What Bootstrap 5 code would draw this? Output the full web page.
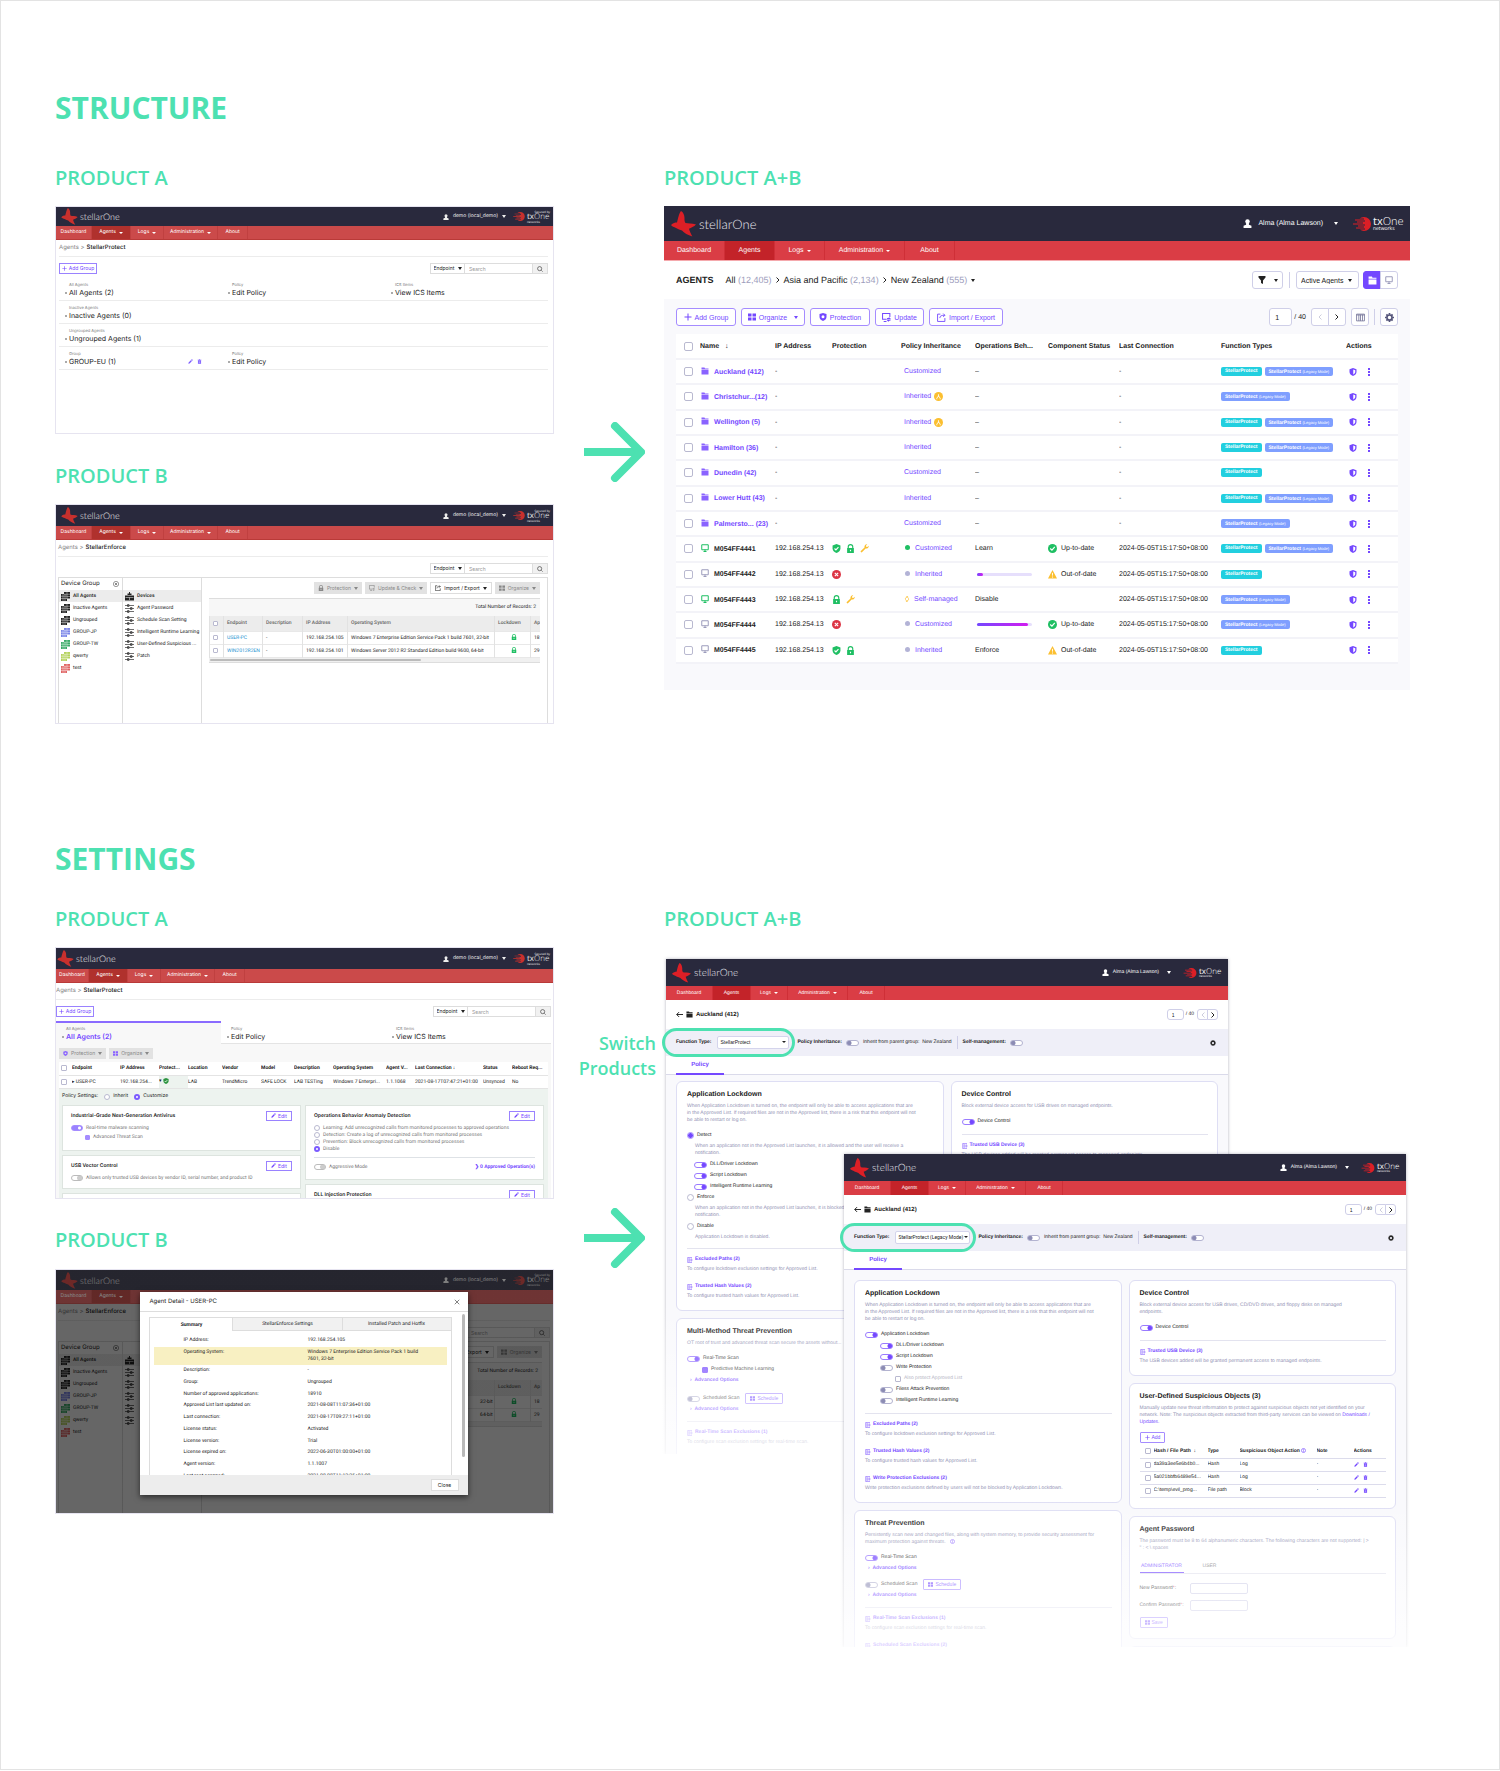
<!DOCTYPE html>
<html lang="en">
<head>
<meta charset="utf-8">
<meta name="viewport" content="width=device-width, initial-scale=1">
<title>Structure and Settings</title>
<link href="https://cdn.jsdelivr.net/npm/bootstrap@5.3.0/dist/css/bootstrap.min.css" rel="stylesheet">
<style>
:root{--mint:#4de1b1;--vio:#7448ff;--navy:#29293d;--mut:#9292b4}
body{background:#fff;color:#222}
.sheet{border:1px solid #e3e3e3;padding:87px 89px 122px 54px;font-family:"Open Sans","Noto Sans",sans-serif}
.sheet h1,.sheet h2,.switch-note{color:var(--mint);margin:0}
.sheet h1{font-size:30px;line-height:40px;font-weight:700}
.sheet h2{font-size:20px;line-height:28px;font-weight:600;margin-bottom:14px}
.board{display:grid;grid-template-columns:minmax(0,499fr) 110px minmax(0,746fr)}
.b1{margin-top:36px}.b2{margin-top:26px}
.second{margin-top:115px}
.mid{padding:0 8px 0 30px}
.mid svg{display:block;width:61px;height:60px}
.b1 .mid svg{margin-top:258px}
.b2 .mid svg{margin-top:127px}
.switch-note{font-size:18px;line-height:25px;font-weight:600;text-align:right;margin-top:126px;margin-left:-30px}
.scr{overflow:hidden;position:relative;line-height:1;background:#fff;margin:0;text-rendering:geometricPrecision}
.scr h3,.scr p{margin:0}
.scr a{text-decoration:none;color:var(--vio)}
.scr button,.scr select,.scr input{font:inherit;line-height:1;margin:0;padding:0;border-radius:0;color:inherit;background:none;border:0}
.scr button{display:inline-flex;align-items:center;justify-content:center;white-space:nowrap}
.scr label{display:inline-flex;align-items:center}
.scr table{table-layout:fixed;width:100%;border-collapse:collapse}
.scr td,.scr th{overflow:hidden;white-space:nowrap;padding:0}
.ic{flex:none;display:inline-block;vertical-align:middle;fill:currentColor}
.s5{width:5px;height:5px}.s6{width:6px;height:6px}.s7{width:7px;height:7px}.s8{width:8px;height:8px}.s9{width:9px;height:9px}.s10{width:10px;height:10px}
.car{flex:none;display:inline-block;border:2px solid transparent;border-top:3px solid currentColor;border-bottom:0;vertical-align:middle}
.chev{width:4px;height:6px;flex:none;fill:none;stroke:currentColor;stroke-width:1}
.scr input[type=checkbox],.scr input[type=radio]{appearance:none;flex:none;border:1px solid #b9b9d0;border-radius:1px;background:#fff;display:block}
.scr input[type=radio]{border-radius:50%}
/* legacy console */
.old{border:1px solid #e6e4f0;font-family:Inter,"Noto Sans",sans-serif;font-size:5px}
.o-top{height:19px;background:var(--navy);color:#eee;display:flex;align-items:center;overflow:hidden}
.o-top .bird{width:17px;height:17px;margin:0 2px 0 5px}
.o-top .word{font:300 9px Lato,"Open Sans";flex:1}
.o-top .who{gap:4px;margin-right:7px}
.bird,.disc{flex:none;fill:#c8302d}
.o-top .disc{width:12px;height:9px;margin-right:2px}
.o-top .brand{font:8px/8px "Open Sans";width:26px}
.o-top .brand small{display:block;font-size:3px;line-height:2px;text-align:right;padding-right:3px}
.o-top .brand small+b+i+small{text-align:left}
.brand b{font-weight:500}.brand i{font-style:normal;font-weight:300}
.o-nav{height:14px;background:#cb4a4a;color:#fff;display:flex;border-bottom:1px solid #b93a38}
.o-nav a{color:#fff!important;display:flex;align-items:center;justify-content:center;gap:3px;border-right:1px solid #c04040}
.o-nav .car,.m-nav .car{border-width:2px 2px 0}
.o-nav a:nth-child(1){width:36px}.o-nav a:nth-child(2){width:39px}.o-nav a:nth-child(3){width:33px}.o-nav a:nth-child(4){width:54px}.o-nav a:nth-child(5){width:30px}
.o-nav .on{background:#b0312d}
.o-body{padding:0 5px 0 3px}
.crumb{height:17px;border-bottom:1px solid #ececec;font-size:6px;color:#888;display:flex;align-items:center;gap:2px}
.crumb b{font-weight:500;color:#222}
.bar1{display:flex;justify-content:space-between;margin-top:6px;height:11px}
.scr .add{border:1px solid #9a82ff;color:var(--vio);width:38px;gap:2px}
.find{display:flex;border:1px solid #ddd;height:11px}
.find label{width:34px;justify-content:center;gap:2px;border-right:1px solid #ddd}
.scr .find select{appearance:none;width:22px}
.scr .find input{width:67px;padding-left:4px}
.scr input::placeholder{color:#999;opacity:1}
.scr .find button{width:15px;background:#f1f1f1;border-left:1px solid #ddd}
.grp{border-bottom:1px solid #ececec;height:23px;padding-top:4px}
.grp small,.tabs3 small{display:block;font:4px/5px Inter;color:#777;padding-left:10px}
.grp div div,.tabs3 .big{font-size:7px;line-height:9px;display:flex;align-items:center;margin-top:1px}
.grp div div::before,.tabs3 .big::before{content:"";width:4px;height:2px;margin-left:6px;border-left:2px solid #aaa}
.act{margin-left:auto;margin-right:20px;color:#7b5bff;display:flex;gap:4px}
.setC .o-body,.setB .o-body{padding-left:2px}
.dg{display:flex;border:1px solid #ddd;border-bottom:0;margin-top:3px;height:150px}
.dg ul{list-style:none;margin:0;padding:0;border-right:1px solid #ddd;flex:none;overflow:hidden}
.dg ul:nth-child(1){width:64px}.dg ul:nth-child(2){width:79px}
.dg li{height:12px;display:flex;align-items:center;gap:3px;padding-left:2px;white-space:nowrap;font-family:Roboto,sans-serif}
.dg ul:first-child li:first-child,.dg ul:nth-child(2) li:first-child{height:12px}
.dg .hl{background:#ececec;font-weight:500}
.dg ul:first-child li:first-child{font-family:Inter;font-size:6px;justify-content:space-between;padding-right:3px}
.dgm{flex:1;min-width:0;padding:4px 7px 0 7px}
.btns{display:flex;justify-content:flex-end;gap:3px;height:12px}
.btns button,.obt{background:#e2e2e2!important;color:#888!important;padding:0 4px!important;gap:3px}
.scr .btns .w{background:#fff!important;border:1px solid #ddd;color:#222!important}
.rec{background:#f7f7f7;border-top:1px solid #ddd;height:18px;margin-top:4px;text-align:right;padding:6px 4px 0 0;font-family:Roboto,sans-serif}
.t-old{font:5px Roboto,sans-serif}
.t-old tr{height:13px;border-bottom:1px solid #e8e8e8}
.t-old thead tr{background:#ececec;height:15px}
.t-old td,.t-old th{border-left:1px solid #e2e2e2;padding-left:3px!important}
.scr .t-old input{width:5px;height:5px}
.t-old th{font-weight:500;color:#666}
.t-old th:nth-child(1){width:14px}.t-old th:nth-child(2){width:39px}.t-old th:nth-child(3){width:40px}.t-old th:nth-child(4){width:45px}.t-old th:nth-child(5){width:147px}.t-old th:nth-child(6){width:36px}
.scr .t-old a{color:#1a8fd0}
.sbar{height:5px;background:#f0f0f0;border-bottom:1px solid #ddd;padding:1px}
.sbar::before{content:"";display:block;width:64%;height:2px;border-radius:1px;background:#bbb}
/* legacy settings */
.setA .o-top .bird{margin-left:1px}
.setA .o-nav a:first-child{width:33px}
.setA .o-body{padding:0 2px 0 0}
.tabs3{height:23px;margin-top:4px;background:#fff}
.tabs3>div{border-bottom:1px solid #e4e4e4;padding-top:5px;height:23px}
.tabs3>.on{border-top:2px solid #8a6bff;background:#f8f8f8;border-bottom:0;padding-top:3px}
.tabs3 .on .big{color:var(--vio);font-weight:600}
.gray{background:#f8f8f8;padding:4px 3px 0;margin-right:0}
.t-set{font:5px Roboto,sans-serif;margin-top:3px}
.t-set th{font-weight:700}
.t-set tr{height:13px;background:#fff;border-bottom:1px solid #e4e4e4}
.scr .t-set input{width:6px;height:6px;margin-left:2px}
.t-set th:nth-child(1){width:13px}.t-set th:nth-child(2){width:48px}.t-set th:nth-child(3){width:39px}.t-set th:nth-child(4){width:29px}.t-set th:nth-child(5){width:34px}.t-set th:nth-child(6){width:39px}.t-set th:nth-child(7){width:33px}.t-set th:nth-child(8){width:39px}.t-set th:nth-child(9){width:53px}.t-set th:nth-child(10){width:29px}.t-set th:nth-child(11){width:68px}.t-set th:nth-child(12){width:29px}
.pol{background:#edf3ef;padding:0 4px 0 3px}
.pol .ps{height:16px;display:flex;align-items:center;gap:6px}
.scr .pol input[type=radio]{width:6px;height:6px;margin-right:3px}
.scr .pol input[type=radio]:checked{border:2px solid #7b5bff}
.oc{background:#fff;border:1px solid #dde4df;padding:5px 8px;font:5px/1 Roboto,sans-serif;color:#777;margin-bottom:4px}
.oc h3{font:600 5px/10px Inter;color:#222}
.oc .hd{display:flex;justify-content:space-between;height:10px}
.scr .oc button{border:1px solid #9a82ff;color:var(--vio);width:26px;gap:2px;font:5px Inter}
.scr .oc .r{display:flex;height:7px;white-space:nowrap}
.scr .oc .thr{width:5px;height:5px;margin-right:3px;background:#a58cff;border-color:#a58cff}
.scr .tgl{width:12px!important;height:6px!important;border-radius:3px!important;border:1px solid #bbb!important;background:radial-gradient(circle at 75% 50%,#ccc 2px,#fff 3px)!important;margin-right:3px!important}
.scr .tgl:checked{border-color:#a58cff!important;background:radial-gradient(circle at 75% 50%,#fff 1px,#9a82ff 2px)!important}
/* modal */
.veil{position:absolute;inset:0;background:linear-gradient(rgba(34,34,34,.55) 34px,rgba(0,0,0,.6) 34px)}
.dlg{position:absolute;left:17%;right:calc(17% + 1px);top:22px;height:203px;background:#fff;box-shadow:0 2px 6px rgba(0,0,0,.6);display:flex;flex-direction:column}
.dlg header{height:20px;border-bottom:1px solid #ddd;display:flex;justify-content:space-between;align-items:center;padding:0 8px 0 9px;font-size:6px}
.dlg .mb{flex:1;min-height:0;overflow:hidden;padding:5px 3px 0 9px;display:flex;gap:10px;position:relative}
.dlg .tabbox{flex:1;border:1px solid #ddd;border-bottom:0;height:168px}
.dlg .tb{display:flex;height:13px;background:#f1f1f1;border-bottom:1px solid #ddd}
.dlg .tb a{color:#333;display:flex;align-items:center;justify-content:center;border-left:1px solid #ddd;font:5px Roboto,sans-serif;flex:1}
.dlg .tb a:first-child{background:#fff;width:82px;flex:none;border:0;font-weight:700;margin-bottom:-1px}
.dlg dl{margin:4px 4px 0;display:flex;flex-direction:column;height:147px;font:5px/1 Roboto,sans-serif}
.dlg dl div{flex:1;display:flex;align-items:center;padding-left:29px}
.dlg dl .y{background:#f8f0c2;flex:none;height:18px;line-height:7px}
.dlg dt{width:124px;font-weight:400}.dlg dd{margin:0}
.dlg .y dt{align-self:flex-start;padding-top:2px}
.dlg .thumb{width:3px;height:143px;margin-top:-3px;background:#b9b9b9;border-radius:2px}
.dlg footer{height:20px;background:#ededed;display:flex;justify-content:flex-end;align-items:center;padding-right:9px}
.scr .dlg footer button{width:28px;height:12px;background:#fff;border:1px solid #ddd}
.setB .o-body{padding-right:3px}
/* unified console */
.new{font-family:"Liberation Sans",Arial,sans-serif;background:#f9f9fc;font-size:7px}
.m-top{background:var(--navy);color:#fff;display:flex;align-items:center;height:35px;padding:0 6px 0 7px}
.m-top .bird,.m-top .disc{fill:#dc1f26}
.m-top .bird{width:25px;height:26px;margin-right:3px}
.m-top .word{font:300 13px Lato,"Open Sans";flex:1;color:#e8e8f0}
.m-top .who{gap:6px}.m-top .car{margin:0 15px 0 11px}
.m-top .disc{width:18px;height:14px;margin-right:2px}
.m-top .brand{font:11px/10px "Open Sans";width:31px}
.m-top .brand small{display:block;font-size:5px;line-height:4px}
.m-nav{height:20px;background:#da3d45;border-bottom:1px solid #f5a9ad;display:flex}
.scr .m-nav a{color:#fff;display:flex;align-items:center;justify-content:center;gap:3px;border-right:1px solid #cf2f37}
.m-nav .on{background:#c32329}
.big1 .m-nav a:nth-child(1){width:61px}.big1 .m-nav a:nth-child(2),.big1 .m-nav a:nth-child(3),.big1 .m-nav a:nth-child(5){width:50px}.big1 .m-nav a:nth-child(4){width:80px}
.sub{height:38px;background:#fff;display:flex;align-items:center;padding:0 12px;font-size:9px;gap:4px;white-space:nowrap}
.n{color:#9d9dbc}
.bx{border:1px solid #cfcfe8!important;border-radius:3px!important;background:#fff!important;height:18px}
.scr .pair .bx:first-child{border-radius:3px 0 0 3px!important}
.scr .pair .bx+.bx{margin-left:-1px;border-radius:0 3px 3px 0!important}
.scr .pair .pick{background:#7448ff!important;border-color:#7448ff!important;color:#fff;width:18px}
.bw{width:18px}.b10{width:11px}
.vl{width:1px;height:16px;background:#cfcfe8;margin:0 2px}
.tool{display:flex;gap:5px;padding:9px 12px 8px;align-items:center}
.tool .vl{margin:0}
.scr .pb{border:1px solid #a58cff;border-radius:3px;background:#fff;color:var(--vio);height:18px;gap:3px}
.grid-wrap{padding:0 12px 26px}
.t-main{height:330px;background:#fff}
.t-main tr{border-bottom:2px solid #f3f3f8}
.t-main thead tr{height:25px}
.t-main th{font-weight:700}
.scr .t-main input{width:9px;height:9px;border-radius:2px;margin-left:8px}
.t-main th:nth-child(1){width:24px}.t-main th:nth-child(2){width:75px}.t-main th:nth-child(3){width:57px}.t-main th:nth-child(4){width:69px}.t-main th:nth-child(5){width:74px}.t-main th:nth-child(6){width:73px}.t-main th:nth-child(7){width:71px}.t-main th:nth-child(8){width:102px}.t-main th:nth-child(9){width:125px}
.t-main a{font-weight:700}
.t-main td:nth-child(2) .ic{margin:0 5px 2px 1px}
.t-main td:nth-child(5){color:var(--vio);padding-left:3px}
.t-main td:nth-child(5) .ic{margin-left:1px}
.t-main td:nth-child(4) .ic{margin-right:5px}
.t-main td:nth-child(7) .ic{margin-right:4px}
.t-main td:nth-child(10) .ic{color:var(--vio);margin:0 5px 0 3px}
.dot{display:inline-block;width:5px;height:5px;border-radius:50%;background:#b3b3d6;margin:0 5px 0 1px}
.dot.gok{background:#1fbf63}
.tag1,.tag2{display:inline-block;height:9px;line-height:9px;border-radius:2px;background:#22cfdf;color:#fff;font-size:5px;font-weight:700;padding:0 4px;margin-right:3px;vertical-align:middle}
.tag2{background:#7f9fff}.tag2 span{font-size:4px;font-weight:400}
.pg{height:3px;width:55px;border-radius:2px;background:#e6dffc;margin-left:2px}
.pg div{height:3px;border-radius:2px;background:linear-gradient(90deg,#7448ff,#d21cf0)}
.gr{color:#1fbf63!important}.gy{color:#9d9dbc!important}.rd{color:#dc3545!important}.yl{color:#fbbf30!important}.vi{color:#8a63ff!important}
/* stacked policy windows */
.stack{display:grid}
.win{grid-area:1/1;width:calc(100% - 184px);font-size:5px;box-shadow:0 0 3px rgba(40,40,70,.35);overflow:visible}
.w1{margin:26px 0 0 2px;height:495px}
.w2{margin:221px 4px 0 0;justify-self:end;height:493px;z-index:1}
.win .m-top{height:27px;padding:0 5px 0 6px}
.win .bird{width:19px;height:20px;margin-right:3px}
.win .word{font-size:10px}
.win .who{gap:4px}.win .m-top .car{margin:0 12px 0 8px}
.win .disc{width:14px;height:10px}
.win .brand{font:8px/7px "Open Sans";width:24px}.win .brand small{font-size:3px;line-height:3px}
.win .m-nav{height:14px;border-bottom:0}
.win .m-nav a:nth-child(1){width:47px}.win .m-nav a:nth-child(2){width:38px}.win .m-nav a:nth-child(3),.win .m-nav a:nth-child(5){width:37px}.win .m-nav a:nth-child(4){width:60px}
.ttl{height:29px;background:#fff;display:flex;align-items:center;padding:0 10px;gap:3px;font-size:6px}
.ttl b{flex:1}
.ttl .bx{height:11px;font-size:5px}
.ttl label{font-size:5px;gap:2px}
.fbar{height:27px;background:#efeff8;display:flex;align-items:center;padding:0 12px 0 10px;white-space:nowrap}
.fbar .vl{height:13px;margin:0 5px}
.inh{margin-left:8px}
.fn{position:relative;gap:6px}
.fn::after{content:"";position:absolute;left:-14px;right:-6px;top:-8px;bottom:-8px;border:3px solid var(--mint);border-radius:15px;pointer-events:none}
.scr .fn select{width:72px;height:13px;padding-left:2px;appearance:none;background:#fff;border:1px solid #d4d4ec;border-radius:2px;font-weight:400;font-size:5px}
.w2 .fn select{font-family:Roboto,sans-serif;width:75px}
.fn .car{position:absolute;right:3px;top:5px;border-width:2px 2px 0}
.w2 .fn .car{right:2px}
.ptab{height:19px;background:#fff;border-bottom:1px solid #dadaea;padding-left:10px}
.ptab a{display:block;width:48px;height:19px;line-height:19px;border-bottom:2px solid var(--vio);text-align:center;font-weight:700;font-size:6px}
.cards{display:grid;grid-template-columns:1fr 1fr;gap:7px;padding:6px 10px 0;overflow:hidden;height:379px}
.w2 .cards{padding-top:10px;height:377px}
.pc{background:#fff;border:1px solid #dedef4;border-radius:6px;padding:9px 9px 10px 10px;margin-bottom:7px}
.scr .pc h3{font-size:7px;line-height:8px;font-weight:700;margin-bottom:4px}
.scr .pc p{line-height:7px;color:var(--mut);margin:0 0 6px}
.scr .pc label{display:flex;height:11px;gap:2px}
.pc .sp{margin-top:6px}
.pc .in{padding-left:8px}.pc .i2{margin-left:7px}.pc .i3{margin-left:15px}.pc .i4{margin-left:30px}
.scr .pc input[type=radio]{width:7px;height:7px;margin-right:1px}
.scr .pc input[type=checkbox]{width:6px;height:6px;margin-right:1px}
.scr .pc input[type=radio]:checked{border:1px solid #a58cff;background:radial-gradient(circle,var(--vio) 2px,#fff 3px)}
.win .sw{width:13px!important;height:6px!important;border:1px solid #b3b3d0!important;border-radius:3px!important;background:radial-gradient(circle at 2px 50%,#8c8cb4 2px,#fff 3px)!important}
.scr .fbar .sw{margin:0 4px}
.win .sw:checked{border-color:#9a7bff!important;background:radial-gradient(circle at 9px 50%,var(--vio) 2px,#fff 3px)!important}
.win .ck:checked{background:var(--vio)!important;border-color:var(--vio)!important}
.off{color:#b5b5c4}
.pc hr{margin:7px 0 5px;color:#c8c8e0;opacity:.5}
.pc .lk{display:flex;align-items:center;gap:2px;height:11px;font-weight:700;margin-bottom:1px}
.scr .pc .lk+p{margin-bottom:8px}
.scr .pc p.last{margin-bottom:0!important}
.scr .w1 p.last{margin-bottom:2px!important}
.scr .pc p.z{margin:2px 0}
.scr .sm{border:1px solid #a58cff;border-radius:1px;color:var(--vio);height:11px;gap:2px;padding:0 4px}
.adv{display:block;font-weight:700;line-height:10px;padding-left:3px}
.t-obj{margin-top:2px}
.t-obj tr{height:13px;border-bottom:1px solid #dcdcec}
.t-obj th:nth-child(1){width:14px}.t-obj th:nth-child(2){width:54px}.t-obj th:nth-child(3){width:32px}.t-obj th:nth-child(4){width:77px}.t-obj th:nth-child(5){width:37px}
.scr .pc .t-obj input{margin-left:5px}
.t-obj .ic{color:var(--vio);margin-right:4px}
.adm{display:flex;border-bottom:1px solid #e2e2ee;height:14px;margin-top:8px;margin-bottom:9px}
.scr .adm a{width:44px;text-align:center;line-height:13px;color:#777;margin-right:4px}
.scr .adm .on{color:var(--vio);border-bottom:1px solid var(--vio)}
.scr .pc .pw{margin-bottom:6px}
.pw span:first-child{width:48px}
.scr .pc .pw input{width:58px;height:11px;border:1px solid #cfcfe8;border-radius:2px;background:#fff}
.fade-out{position:absolute;left:-4px;right:-4px;bottom:-4px;height:154px;background:linear-gradient(rgba(255,255,255,0),rgba(255,255,255,.75) 150px,#fff 150px);pointer-events:none}
</style>
</head>
<body>
<svg width="0" height="0" class="position-absolute" aria-hidden="true">
<symbol id="bird" viewBox="0 0 25 26"><path d="M10 0C12 1 13.500 4 13.500 7c-.1 2 .1 4 1 5 2.500.5 6.500 0 10.500 1.600-2 2-5 3.400-7 4.200.5 2.200 2 5.200 3.300 7.700-4.300-1.500-8.300-3.500-10.300-6-2-1-4-1.100-6-2.500-2-1-4-1.500-5-3 2-2 4-2.500 6-2.500C7 8 8 2 10 0Z"/></symbol>
<symbol id="disc" viewBox="0 0 18 14"><path d="M11 0a7 7 0 0 1 0 14c-1.500 0-3-.5-4-1.400h5v-1H3v-1h8v-1H5v-1h7v-1H0v-1h10v-1H4v-1h8v-1H2v-1h9v-1H6.500A7 7 0 0 1 11 0Z"/></symbol>
<symbol id="user" viewBox="0 0 16 16"><circle cx="8" cy="4.500" r="4"/><path d="M5.500 7h5v3l4.500 2v4H1v-4l4.500-2z"/></symbol>
<symbol id="plus" viewBox="0 0 16 16"><path d="M7 1h2v6h6v2H9v6H7V9H1V7h6z"/></symbol>
<symbol id="search" viewBox="0 0 16 16"><path fill="none" stroke="currentColor" stroke-width="1.500" d="M11.500 11.500 15 15M12.500 7a5.500 5.500 0 1 1-11 0 5.500 5.500 0 0 1 11 0z"/></symbol>
<symbol id="pen" viewBox="0 0 16 16"><path d="M1 15l1-4 7-7 3 3-7 7zM10 3l2-2q1-.5 2 .5l.8.8q.7 1 0 1.700l-2 2z"/></symbol>
<symbol id="bin" viewBox="0 0 16 16"><path d="M2 2h4l1-1h2l1 1h4v2H2zM3 5h10v10H3zm3 2v6h1V7zm3 0v6h1V7z" fill-rule="evenodd"/></symbol>
<symbol id="folder" viewBox="0 0 16 16"><path d="M1 1h6l1 2h7v2H1zM1 6h14v9H1z"/></symbol>
<symbol id="mon" viewBox="0 0 16 16"><path fill="none" stroke="currentColor" stroke-width="2" d="M1.500 1.500h13v10h-13zM5 15h6M8 11v4"/></symbol>
<symbol id="shc" viewBox="0 0 16 16"><path d="M8 0l7 2.500V8c0 4-3 6.500-7 8-4-1.500-7-4-7-8V2.500z"/><path fill="none" stroke="#fff" stroke-width="2" d="M4.500 8l2.500 2.500L11.500 5.500"/></symbol>
<symbol id="shh" viewBox="0 0 16 16"><path fill-rule="evenodd" d="M8 0l7 2.500V8c0 4-3 6.500-7 8-4-1.500-7-4-7-8V2.500zM8.500 3v10c2.500-1.500 4-3 4-5V4.300z"/></symbol>
<symbol id="sho" viewBox="0 0 16 16"><path fill-rule="evenodd" d="M8 0l7 2v6c0 4-3 6.500-7 8-4-1.500-7-4-7-8V2zm0 4.500a3 3 0 1 0 0 6 3 3 0 0 0 0-6z"/></symbol>
<symbol id="lock" viewBox="0 0 16 16"><path fill-rule="evenodd" d="M3 7V5a5 5 0 0 1 10 0v2h1v9H2V7zm2 0h6V5a3 3 0 0 0-6 0zm2 3v3h2v-3z"/></symbol>
<symbol id="wr" viewBox="0 0 16 16"><path d="M1 13l7-7c-.5-3 1.500-6 5-5.500L10.500 3l.5 2 2 .5L15.500 3c.5 3.500-2.500 5.500-5.500 5l-7 7q-2 0-2-2z"/></symbol>
<symbol id="xc" viewBox="0 0 16 16"><circle cx="8" cy="8" r="8"/><path stroke="#fff" stroke-width="2" d="M5 5l6 6M11 5l-6 6"/></symbol>
<symbol id="cc" viewBox="0 0 16 16"><circle cx="8" cy="8" r="8"/><path fill="none" stroke="#fff" stroke-width="2" d="M4 8l3 3 5-6"/></symbol>
<symbol id="warn" viewBox="0 0 16 16"><path d="M8 0l8 15H0z"/><path stroke="#fff" stroke-width="1.600" d="M8 5v5M8 11.500v2"/></symbol>
<symbol id="org" viewBox="0 0 16 16"><circle cx="8" cy="8" r="8"/><path fill="none" stroke="#fff" stroke-width="1.500" d="M8 4v4M5 11l3-4 3 4M4 12h2M10 12h2"/></symbol>
<symbol id="self" viewBox="0 0 16 16"><path fill="none" stroke="currentColor" stroke-width="2" d="M4 10V6l5-5M6 2h4v3M12 6v4l-5 5M10 14H6v-3"/></symbol>
<symbol id="dots" viewBox="0 0 16 16"><path d="M6 0h4v4H6zM6 6h4v4H6zM6 12h4v4H6z"/></symbol>
<symbol id="gear" viewBox="0 0 16 16"><circle cx="8" cy="8" r="4.500" fill="none" stroke="currentColor" stroke-width="3"/><path stroke="currentColor" stroke-width="3" d="M8 0v3M8 13v3M0 8h3M13 8h3M2.500 2.500l2 2M11.500 11.500l2 2M13.500 2.500l-2 2M4.500 11.500l-2 2"/></symbol>
<symbol id="fun" viewBox="0 0 16 16"><path d="M1 0h14v3L10 9v7l-4-2V9L1 3z"/></symbol>
<symbol id="cols" viewBox="0 0 16 16"><path fill="none" stroke="currentColor" stroke-width="1.500" d="M1 2h14v12H1zM1 3.500h14M5 3v11M8 3v11M11.500 3v11"/></symbol>
<symbol id="four" viewBox="0 0 16 16"><path d="M0 1h7v6H0zM9 1h7v6H9zM0 9h7v6H0zM9 9h7v6H9z"/></symbol>
<symbol id="upd" viewBox="0 0 16 16"><path fill="none" stroke="currentColor" stroke-width="1.800" d="M8 11H1V1h13v6M3 15h5M9 10h5l-2-2M15 13h-5l2 2"/></symbol>
<symbol id="exp" viewBox="0 0 16 16"><path fill="none" stroke="currentColor" stroke-width="1.600" d="M6 2H1v13h13V9M5 9c0-4 3-5 9-5M11 1l3 3-3 3"/></symbol>
<symbol id="dgi" viewBox="0 0 18 18"><path d="M6 0h12v13H6z"/><path d="M0 4h12v14H0z"/><path stroke="#fff" stroke-width=".8" d="M0 8.500h12M0 13h12M4 4v14M8 4v14M12 0v14M6 4.500h12M12 9h6"/></symbol>
<symbol id="sld" viewBox="0 0 18 18"><path fill="none" stroke="currentColor" stroke-width="1.300" d="M0 3h18M0 9h18M0 15h18M5 1v4h3V1zM11 7v4h3V7zM5 13v4h3v-4z"/></symbol>
<symbol id="dev" viewBox="0 0 18 18"><path d="M0 7h18v10H0zM5 3h8v3H5zM8 0h2v6H8z"/><path stroke="#fff" d="M1 11h16M9 11v5"/></symbol>
<symbol id="doc" viewBox="0 0 16 16"><path fill="none" stroke="currentColor" stroke-width="1.500" d="M12 4V1H2v14h10v-3M4 5h5M4 8h10l-2-2M4 11h5M14 8l-2 2"/></symbol>
<symbol id="inf" viewBox="0 0 16 16"><circle cx="8" cy="8" r="6.500" fill="none" stroke="currentColor" stroke-width="2"/><path d="M7 4h2v2H7zM7 7h2v5H7z"/></symbol>
<symbol id="cx" viewBox="0 0 16 16"><circle cx="8" cy="8" r="7" fill="none" stroke="currentColor" stroke-width="1.200"/><path stroke="currentColor" stroke-width="1.500" d="M5.500 5.500l5 5M10.500 5.500l-5 5"/></symbol>
<symbol id="back" viewBox="0 0 16 16"><path fill="none" stroke="currentColor" stroke-width="2.200" d="M16 8H2M7 2.500L1.500 8 7 13.500"/></symbol>
<symbol id="xr" viewBox="0 0 16 16"><path fill="none" stroke="currentColor" stroke-width="1.500" d="M2 2l12 12M14 2L2 14"/></symbol>
<symbol id="gt" viewBox="0 0 4 6"><path d="M.5.5 3 3 .5 5.500"/></symbol>
<symbol id="lt" viewBox="0 0 4 6"><path d="M3.500.5 1 3l2.500 2.500"/></symbol>
<symbol id="arrow" viewBox="0 0 61 60"><path fill="none" stroke="#4de1b1" stroke-width="8" d="M0 30H56"/><path fill="none" stroke="#4de1b1" stroke-width="8" stroke-linejoin="round" stroke-linecap="round" d="M31 4L57 30 31 56"/></symbol>
</svg>

<main class="sheet">
<section>
<h1>STRUCTURE</h1>
<div class="board b1">
<div>
<h2>PRODUCT A</h2>
<figure class="scr old" style="height:228px">
<div class="o-top"><svg class="bird"><use href="#bird"/></svg><span class="word">stellarOne</span><span class="who d-flex align-items-center"><svg class="ic s6"><use href="#user"/></svg>demo (local_demo)<i class="car"></i></span><svg class="disc"><use href="#disc"/></svg><span class="brand"><small>Secured by</small><b>tx</b><i>One</i><small>networks</small></span></div>
<nav class="o-nav"><a href="#">Dashboard</a><a href="#" class="on">Agents <i class="car"></i></a><a href="#">Logs <i class="car"></i></a><a href="#">Administration <i class="car"></i></a><a href="#">About</a></nav>
<div class="o-body">
<div class="crumb">Agents &gt; <b>StellarProtect</b></div>
<div class="bar1"><button class="add"><svg class="ic s5"><use href="#plus"/></svg>Add Group</button><div class="find"><label><select aria-label="Search field"><option>Endpoint</option></select><i class="car"></i></label><input type="text" placeholder="Search" aria-label="Search"><button aria-label="Search"><svg class="ic s6"><use href="#search"/></svg></button></div></div>
<div class="pt-1">
<div class="row g-0 grp"><div class="col-4"><small>All Agents</small><div>All Agents (2)</div></div><div class="col-4"><small>Policy</small><div>Edit Policy</div></div><div class="col-4"><small>ICS Items</small><div>View ICS Items</div></div></div>
<div class="row g-0 grp"><div class="col-4"><small>Inactive Agents</small><div>Inactive Agents (0)</div></div></div>
<div class="row g-0 grp"><div class="col-4"><small>Ungrouped Agents</small><div>Ungrouped Agents (1)</div></div></div>
<div class="row g-0 grp"><div class="col-4"><small>Group</small><div>GROUP-EU (1)<span class="act"><svg class="ic s5"><use href="#pen"/></svg><svg class="ic s5"><use href="#bin"/></svg></span></div></div><div class="col-4"><small>Policy</small><div>Edit Policy</div></div></div>
</div>
</div>
</figure>
<h2 style="margin-top:28px">PRODUCT B</h2>
<figure class="scr old setC" style="height:220px">
<div class="o-top" style="height:21px"><svg class="bird"><use href="#bird"/></svg><span class="word">stellarOne</span><span class="who d-flex align-items-center"><svg class="ic s6"><use href="#user"/></svg>demo (local_demo)<i class="car"></i></span><svg class="disc"><use href="#disc"/></svg><span class="brand"><small>Secured by</small><b>tx</b><i>One</i><small>networks</small></span></div>
<nav class="o-nav"><a href="#">Dashboard</a><a href="#" class="on">Agents <i class="car"></i></a><a href="#">Logs <i class="car"></i></a><a href="#">Administration <i class="car"></i></a><a href="#">About</a></nav>
<div class="o-body">
<div class="crumb">Agents &gt; <b>StellarEnforce</b></div>
<div class="bar1"><span></span><div class="find"><label><select aria-label="Search field"><option>Endpoint</option></select><i class="car"></i></label><input type="text" placeholder="Search" aria-label="Search"><button aria-label="Search"><svg class="ic s6"><use href="#search"/></svg></button></div></div>
<div class="dg">
<ul><li>Device Group <svg class="ic s6"><use href="#cx"/></svg></li><li class="hl"><svg class="ic s9"><use href="#dgi"/></svg>All Agents</li><li><svg class="ic s9"><use href="#dgi"/></svg>Inactive Agents</li><li><svg class="ic s9"><use href="#dgi"/></svg>Ungrouped</li><li><svg class="ic s9" color="#7b85e8"><use href="#dgi"/></svg>GROUP-JP</li><li><svg class="ic s9" color="#3bab68"><use href="#dgi"/></svg>GROUP-TW</li><li><svg class="ic s9" color="#b4d25c"><use href="#dgi"/></svg>qwerty</li><li><svg class="ic s9" color="#e06464"><use href="#dgi"/></svg>test</li></ul>
<ul><li></li><li class="hl"><svg class="ic s9"><use href="#dev"/></svg>Devices</li><li><svg class="ic s9"><use href="#sld"/></svg>Agent Password</li><li><svg class="ic s9"><use href="#sld"/></svg>Schedule Scan Setting</li><li><svg class="ic s9"><use href="#sld"/></svg>Intelligent Runtime Learning</li><li><svg class="ic s9"><use href="#sld"/></svg>User-Defined Suspicious ...</li><li><svg class="ic s9"><use href="#sld"/></svg>Patch</li></ul>
<div class="dgm">
<div class="btns"><button><svg class="ic s6"><use href="#lock"/></svg>Protection <i class="car"></i></button><button><svg class="ic s6"><use href="#upd"/></svg>Update &amp; Check <i class="car"></i></button><button class="w"><svg class="ic s6"><use href="#exp"/></svg>Import / Export <i class="car"></i></button><button><svg class="ic s6"><use href="#four"/></svg>Organize <i class="car"></i></button></div>
<div class="rec">Total Number of Records: 2</div>
<table class="t-old"><thead><tr><th><input type="checkbox" aria-label="All"></th><th>Endpoint</th><th>Description</th><th>IP Address</th><th>Operating System</th><th>Lockdown</th><th>Ap</th></tr></thead>
<tbody><tr><td><input type="checkbox" aria-label="USER-PC"></td><td><a href="#">USER-PC</a></td><td>-</td><td>192.168.254.105</td><td>Windows 7 Enterprise Edition Service Pack 1 build 7601, 32-bit</td><td class="text-center"><svg class="ic s6 gr"><use href="#lock"/></svg></td><td>18</td></tr>
<tr><td><input type="checkbox" aria-label="WIN2012R2EN"></td><td><a href="#">WIN2012R2EN</a></td><td>-</td><td>192.168.254.101</td><td>Windows Server 2012 R2 Standard Edition build 9600, 64-bit</td><td class="text-center"><svg class="ic s6 gr"><use href="#lock"/></svg></td><td>29</td></tr></tbody></table>
<div class="sbar"></div>
</div></div></div>
</figure>
</div>
<div class="mid"><svg><use href="#arrow"/></svg></div>
<div>
<h2>PRODUCT A+B</h2>
<figure class="scr new big1">
<div class="m-top"><svg class="bird"><use href="#bird"/></svg><span class="word">stellarOne</span><span class="who d-flex align-items-center"><svg class="ic s9"><use href="#user"/></svg>Alma (Alma Lawson)</span><i class="car"></i><svg class="disc"><use href="#disc"/></svg><span class="brand"><b>tx</b><i>One</i><small>networks</small></span></div>
<nav class="m-nav"><a href="#">Dashboard</a><a href="#" class="on">Agents</a><a href="#">Logs <i class="car"></i></a><a href="#">Administration <i class="car"></i></a><a href="#">About</a></nav>
<div class="sub"><b class="me-1">AGENTS</b><span class="ps-1">All <span class="n">(12,405)</span></span><svg class="chev"><use href="#gt"/></svg><span>Asia and Pacific <span class="n">(2,134)</span></span><svg class="chev"><use href="#gt"/></svg><span>New Zealand <span class="n">(555)</span></span><i class="car"></i>
<button class="bx ms-auto" style="width:31px" aria-label="Filter"><svg class="ic s8 me-2"><use href="#fun"/></svg><i class="car"></i></button><span class="vl"></span>
<label class="bx" style="width:63px;font-size:7px;padding-left:4px"><select aria-label="Agent state" style="appearance:none;width:47px"><option>Active Agents</option></select><i class="car"></i></label>
<span class="d-flex pair"><button class="bx pick" aria-label="Folders"><svg class="ic s9"><use href="#folder"/></svg></button><button class="bx gy bw" aria-label="Devices"><svg class="ic s8"><use href="#mon"/></svg></button></span></div>
<div class="tool"><button class="pb" style="width:60px"><svg class="ic s8"><use href="#plus"/></svg>Add Group</button><button class="pb" style="width:64px"><svg class="ic s8"><use href="#four"/></svg>Organize <i class="car ms-1"></i></button><button class="pb" style="width:60px"><svg class="ic s8"><use href="#sho"/></svg>Protection</button><button class="pb" style="width:49px"><svg class="ic s9"><use href="#upd"/></svg>Update</button><button class="pb" style="width:74px"><svg class="ic s9"><use href="#exp"/></svg>Import / Export</button>
<label class="ms-auto"><input type="text" class="bx" value="1" aria-label="Page" style="width:23px;padding-left:5px;margin-right:2px">/ 40</label><span class="d-flex pair"><button class="bx gy bw" aria-label="Previous"><svg class="chev opacity-50"><use href="#lt"/></svg></button><button class="bx bw" aria-label="Next"><svg class="chev"><use href="#gt"/></svg></button></span><button class="bx bw" style="color:#77779a" aria-label="Columns"><svg class="ic s9"><use href="#cols"/></svg></button><span class="vl"></span><button class="bx bw" style="color:#55557a" aria-label="Settings"><svg class="ic s9"><use href="#gear"/></svg></button></div>
<div class="grid-wrap"><table class="t-main">
<thead><tr><th><input type="checkbox" aria-label="All"></th><th>Name &nbsp; ↓</th><th>IP Address</th><th>Protection</th><th>Policy Inheritance</th><th>Operations Beh...</th><th>Component Status</th><th>Last Connection</th><th>Function Types</th><th>Actions</th></tr></thead>
<tbody>
<tr><td><input type="checkbox" aria-label="Auckland"></td><td><svg class="ic s8 vi"><use href="#folder"/></svg><a href="#">Auckland (412)</a></td><td>-</td><td></td><td>Customized</td><td>–</td><td></td><td>-</td><td><span class="tag1">StellarProtect</span><span class="tag2">StellarProtect <span>(Legacy Mode)</span></span></td><td><svg class="ic s8"><use href="#shh"/></svg><svg class="ic s8"><use href="#dots"/></svg></td></tr>
<tr><td><input type="checkbox" aria-label="Christchurch"></td><td><svg class="ic s8 vi"><use href="#folder"/></svg><a href="#">Christchur...(12)</a></td><td>-</td><td></td><td>Inherited <svg class="ic s9 yl"><use href="#org"/></svg></td><td>–</td><td></td><td>-</td><td><span class="tag2">StellarProtect <span>(Legacy Mode)</span></span></td><td><svg class="ic s8"><use href="#shh"/></svg><svg class="ic s8"><use href="#dots"/></svg></td></tr>
<tr><td><input type="checkbox" aria-label="Wellington"></td><td><svg class="ic s8 vi"><use href="#folder"/></svg><a href="#">Wellington (5)</a></td><td>-</td><td></td><td>Inherited <svg class="ic s9 yl"><use href="#org"/></svg></td><td>–</td><td></td><td>-</td><td><span class="tag1">StellarProtect</span><span class="tag2">StellarProtect <span>(Legacy Mode)</span></span></td><td><svg class="ic s8"><use href="#shh"/></svg><svg class="ic s8"><use href="#dots"/></svg></td></tr>
<tr><td><input type="checkbox" aria-label="Hamilton"></td><td><svg class="ic s8 vi"><use href="#folder"/></svg><a href="#">Hamilton (36)</a></td><td>-</td><td></td><td>Inherited</td><td>–</td><td></td><td>-</td><td><span class="tag1">StellarProtect</span><span class="tag2">StellarProtect <span>(Legacy Mode)</span></span></td><td><svg class="ic s8"><use href="#shh"/></svg><svg class="ic s8"><use href="#dots"/></svg></td></tr>
<tr><td><input type="checkbox" aria-label="Dunedin"></td><td><svg class="ic s8 vi"><use href="#folder"/></svg><a href="#">Dunedin (42)</a></td><td>-</td><td></td><td>Customized</td><td>–</td><td></td><td>-</td><td><span class="tag1">StellarProtect</span></td><td><svg class="ic s8"><use href="#shh"/></svg><svg class="ic s8"><use href="#dots"/></svg></td></tr>
<tr><td><input type="checkbox" aria-label="Lower Hutt"></td><td><svg class="ic s8 vi"><use href="#folder"/></svg><a href="#">Lower Hutt (43)</a></td><td>-</td><td></td><td>Inherited</td><td>–</td><td></td><td>-</td><td><span class="tag1">StellarProtect</span><span class="tag2">StellarProtect <span>(Legacy Mode)</span></span></td><td><svg class="ic s8"><use href="#shh"/></svg><svg class="ic s8"><use href="#dots"/></svg></td></tr>
<tr><td><input type="checkbox" aria-label="Palmerston"></td><td><svg class="ic s8 vi"><use href="#folder"/></svg><a href="#">Palmersto... (23)</a></td><td>-</td><td></td><td>Customized</td><td>–</td><td></td><td>-</td><td><span class="tag2">StellarProtect <span>(Legacy Mode)</span></span></td><td><svg class="ic s8"><use href="#shh"/></svg><svg class="ic s8"><use href="#dots"/></svg></td></tr>
<tr><td><input type="checkbox" aria-label="M054FF4441"></td><td><svg class="ic s8 gr"><use href="#mon"/></svg><b>M054FF4441</b></td><td>192.168.254.13</td><td><svg class="ic s9 gr"><use href="#shc"/></svg><svg class="ic s9 gr"><use href="#lock"/></svg><svg class="ic s9 yl"><use href="#wr"/></svg></td><td><i class="dot gok"></i>Customized</td><td>Learn</td><td><svg class="ic s9 gr"><use href="#cc"/></svg>Up-to-date</td><td>2024-05-05T15:17:50+08:00</td><td><span class="tag1">StellarProtect</span><span class="tag2">StellarProtect <span>(Legacy Mode)</span></span></td><td><svg class="ic s8"><use href="#shh"/></svg><svg class="ic s8"><use href="#dots"/></svg></td></tr>
<tr><td><input type="checkbox" aria-label="M054FF4442"></td><td><svg class="ic s8 gy"><use href="#mon"/></svg><b>M054FF4442</b></td><td>192.168.254.13</td><td><svg class="ic s9 rd"><use href="#xc"/></svg></td><td><i class="dot"></i>Inherited</td><td><div class="pg"><div style="width:11%"></div></div></td><td><svg class="ic s9 yl"><use href="#warn"/></svg>Out-of-date</td><td>2024-05-05T15:17:50+08:00</td><td><span class="tag1">StellarProtect</span></td><td><svg class="ic s8"><use href="#shh"/></svg><svg class="ic s8"><use href="#dots"/></svg></td></tr>
<tr><td><input type="checkbox" aria-label="M054FF4443"></td><td><svg class="ic s8 gr"><use href="#mon"/></svg><b>M054FF4443</b></td><td>192.168.254.13</td><td><svg class="ic s9 gr"><use href="#lock"/></svg><svg class="ic s9 yl"><use href="#wr"/></svg></td><td><svg class="ic s6 yl me-1 ms-0"><use href="#self"/></svg>Self-managed</td><td>Disable</td><td></td><td>2024-05-05T15:17:50+08:00</td><td><span class="tag2">StellarProtect <span>(Legacy Mode)</span></span></td><td><svg class="ic s8"><use href="#shh"/></svg><svg class="ic s8"><use href="#dots"/></svg></td></tr>
<tr><td><input type="checkbox" aria-label="M054FF4444"></td><td><svg class="ic s8 gy"><use href="#mon"/></svg><b>M054FF4444</b></td><td>192.168.254.13</td><td><svg class="ic s9 rd"><use href="#xc"/></svg></td><td><i class="dot"></i>Customized</td><td><div class="pg"><div style="width:92%"></div></div></td><td><svg class="ic s9 gr"><use href="#cc"/></svg>Up-to-date</td><td>2024-05-05T15:17:50+08:00</td><td><span class="tag2">StellarProtect <span>(Legacy Mode)</span></span></td><td><svg class="ic s8"><use href="#shh"/></svg><svg class="ic s8"><use href="#dots"/></svg></td></tr>
<tr><td><input type="checkbox" aria-label="M054FF4445"></td><td><svg class="ic s8 gy"><use href="#mon"/></svg><b>M054FF4445</b></td><td>192.168.254.13</td><td><svg class="ic s9 gr"><use href="#shc"/></svg><svg class="ic s9 gr"><use href="#lock"/></svg></td><td><i class="dot"></i>Inherited</td><td>Enforce</td><td><svg class="ic s9 yl"><use href="#warn"/></svg>Out-of-date</td><td>2024-05-05T15:17:50+08:00</td><td><span class="tag1">StellarProtect</span></td><td><svg class="ic s8"><use href="#shh"/></svg><svg class="ic s8"><use href="#dots"/></svg></td></tr>
</tbody></table></div>
</figure>
</div>
</div>
</section>

<section class="second">
<h1>SETTINGS</h1>
<div class="board b2">
<div>
<h2>PRODUCT A</h2>
<figure class="scr old setA" style="height:252px">
<div class="o-top" style="height:21px"><svg class="bird"><use href="#bird"/></svg><span class="word">stellarOne</span><span class="who d-flex align-items-center"><svg class="ic s6"><use href="#user"/></svg>demo (local_demo)<i class="car"></i></span><svg class="disc"><use href="#disc"/></svg><span class="brand"><small>Secured by</small><b>tx</b><i>One</i><small>networks</small></span></div>
<nav class="o-nav"><a href="#">Dashboard</a><a href="#" class="on">Agents <i class="car"></i></a><a href="#">Logs <i class="car"></i></a><a href="#">Administration <i class="car"></i></a><a href="#">About</a></nav>
<div class="o-body">
<div class="crumb">Agents &gt; <b>StellarProtect</b></div>
<div class="bar1"><button class="add"><svg class="ic s5"><use href="#plus"/></svg>Add Group</button><div class="find"><label><select aria-label="Search field"><option>Endpoint</option></select><i class="car"></i></label><input type="text" placeholder="Search" aria-label="Search"><button aria-label="Search"><svg class="ic s6"><use href="#search"/></svg></button></div></div>
<div class="row g-0 tabs3"><div class="col-4 on"><small>All Agents</small><div class="big">All Agents (2)</div></div><div class="col-4"><small>Policy</small><div class="big">Edit Policy</div></div><div class="col-4"><small>ICS Items</small><div class="big">View ICS Items</div></div></div>
<div class="gray"><div class="d-flex" style="gap:3px;height:11px"><button class="obt"><svg class="ic s5 vi"><use href="#sho"/></svg>Protection <i class="car"></i></button><button class="obt"><svg class="ic s5 vi"><use href="#four"/></svg>Organize <i class="car"></i></button></div>
<table class="t-set"><thead><tr><th><input type="checkbox" aria-label="All"></th><th>Endpoint</th><th>IP Address</th><th>Protect...</th><th>Location</th><th>Vendor</th><th>Model</th><th>Description</th><th>Operating System</th><th>Agent V...</th><th>Last Connection ↓</th><th>Status</th><th>Reboot Req...</th></tr></thead>
<tbody><tr><td><input type="checkbox" aria-label="USER-PC"></td><td>▸ USER-PC</td><td>192.168.254...</td><td style="background:#edf3ef">▾ <svg class="ic s6" color="#2d9440"><use href="#shc"/></svg></td><td>LAB</td><td>TrendMicro</td><td>SAFE LOCK</td><td>LAB TESTing</td><td>Windows 7 Enterpri...</td><td>1.1.1068</td><td>2021-08-17T07:47:21+01:00</td><td>Unsynced</td><td>No</td></tr></tbody></table>
<div class="pol"><div class="ps">Policy Settings: <label><input type="radio" name="ps">Inherit</label><label><input type="radio" name="ps" checked>Customize</label></div>
<div class="row g-0" style="gap:4px"><div class="col">
<div class="oc" style="height:46px"><div class="hd"><h3>Industrial-Grade Next-Generation Antivirus</h3><button><svg class="ic s5"><use href="#pen"/></svg>Edit</button></div><label class="r mt-1"><input type="checkbox" class="tgl" checked>Real-time malware scanning</label><label class="r" style="margin:2px 0 0 14px"><input type="checkbox" checked class="thr">Advanced Threat Scan</label></div>
<div class="oc" style="height:34px"><div class="hd"><h3>USB Vector Control</h3><button><svg class="ic s5"><use href="#pen"/></svg>Edit</button></div><label class="r mt-1"><input type="checkbox" class="tgl">Allows only trusted USB devices by vendor ID, serial number, and product ID</label></div>
<div class="oc" style="height:30px"></div></div>
<div class="col"><div class="oc" style="height:75px"><div class="hd"><h3>Operations Behavior Anomaly Detection</h3><button><svg class="ic s5"><use href="#pen"/></svg>Edit</button></div><label class="r mt-1"><input type="radio" name="ob">Learning: Add unrecognized calls from monitored processes to approved operations</label><label class="r"><input type="radio" name="ob">Detection: Create a log of unrecognized calls from monitored processes</label><label class="r"><input type="radio" name="ob">Prevention: Block unrecognized calls from monitored processes</label><label class="r"><input type="radio" name="ob" checked>Disable</label>
<div class="d-flex justify-content-between align-items-center border-top mt-1" style="height:20px"><label><input type="checkbox" class="tgl">Aggressive Mode</label><a href="#" class="fw-bold">❯ 0 Approved Operation(s)</a></div></div>
<div class="oc" style="height:40px"><div class="hd"><h3>DLL Injection Protection</h3><button><svg class="ic s5"><use href="#pen"/></svg>Edit</button></div></div></div></div>
</div></div></div>
</figure>
<h2 style="margin-top:27px;margin-bottom:15px">PRODUCT B</h2>
<figure class="scr old setB" style="height:245px">
<div class="o-top" style="height:20px"><svg class="bird"><use href="#bird"/></svg><span class="word">stellarOne</span><span class="who d-flex align-items-center"><svg class="ic s6"><use href="#user"/></svg>demo (local_demo)<i class="car"></i></span><svg class="disc"><use href="#disc"/></svg><span class="brand"><small>Secured by</small><b>tx</b><i>One</i><small>networks</small></span></div>
<nav class="o-nav"><a href="#">Dashboard</a><a href="#" class="on">Agents <i class="car"></i></a></nav>
<div class="o-body">
<div class="crumb">Agents &gt; <b>StellarEnforce</b></div>
<div class="bar1"><span></span><div class="find"><input type="text" placeholder="Search" aria-label="Search"><button aria-label="Search"><svg class="ic s6"><use href="#search"/></svg></button></div></div>
<div class="dg" style="height:175px">
<ul><li>Device Group <svg class="ic s6"><use href="#cx"/></svg></li><li class="hl"><svg class="ic s9"><use href="#dgi"/></svg>All Agents</li><li><svg class="ic s9"><use href="#dgi"/></svg>Inactive Agents</li><li><svg class="ic s9"><use href="#dgi"/></svg>Ungrouped</li><li><svg class="ic s9" color="#7b85e8"><use href="#dgi"/></svg>GROUP-JP</li><li><svg class="ic s9" color="#3bab68"><use href="#dgi"/></svg>GROUP-TW</li><li><svg class="ic s9" color="#b4d25c"><use href="#dgi"/></svg>qwerty</li><li><svg class="ic s9" color="#e06464"><use href="#dgi"/></svg>test</li></ul>
<ul><li></li><li class="hl"><svg class="ic s9"><use href="#dev"/></svg></li><li><svg class="ic s9"><use href="#sld"/></svg></li><li><svg class="ic s9"><use href="#sld"/></svg></li><li><svg class="ic s9"><use href="#sld"/></svg></li><li><svg class="ic s9"><use href="#sld"/></svg></li><li><svg class="ic s9"><use href="#sld"/></svg></li></ul>
<div class="dgm">
<div class="btns"><button class="w">/ Export <i class="car"></i></button><button><svg class="ic s6"><use href="#four"/></svg>Organize <i class="car"></i></button></div>
<div class="rec">Total Number of Records: 2</div>
<table class="t-old"><thead><tr><th></th><th></th><th></th><th></th><th></th><th>Lockdown</th><th>Ap</th></tr></thead>
<tbody><tr><td></td><td></td><td></td><td></td><td class="text-end">32-bit&nbsp;</td><td class="text-center"><svg class="ic s6 gr"><use href="#lock"/></svg></td><td>18</td></tr>
<tr><td></td><td></td><td></td><td></td><td class="text-end">64-bit&nbsp;</td><td class="text-center"><svg class="ic s6 gr"><use href="#lock"/></svg></td><td>29</td></tr></tbody></table>
<div class="sbar"></div>
</div></div></div>
<div class="veil"></div>
<div class="dlg" role="dialog" aria-label="Agent Detail"><header>Agent Detail - USER-PC<svg class="ic s6"><use href="#xr"/></svg></header>
<div class="mb"><div class="tabbox"><div class="tb"><a href="#" class="text-dark">Summary</a><a href="#" class="text-dark">StellarEnforce Settings</a><a href="#" class="text-dark">Installed Patch and Hotfix</a></div>
<dl><div><dt>IP Address:</dt><dd>192.168.254.105</dd></div><div class="y"><dt>Operating System:</dt><dd>Windows 7 Enterprise Edition Service Pack 1 build<br>7601, 32-bit</dd></div><div><dt>Description:</dt><dd>-</dd></div><div><dt>Group:</dt><dd>Ungrouped</dd></div><div><dt>Number of approved applications:</dt><dd>18910</dd></div><div><dt>Approved List last updated on:</dt><dd>2021-08-08T11:07:36+01:00</dd></div><div><dt>Last connection:</dt><dd>2021-08-17T09:27:11+01:00</dd></div><div><dt>License status:</dt><dd>Activated</dd></div><div><dt>License version:</dt><dd>Trial</dd></div><div><dt>License expired on:</dt><dd>2022-06-30T01:00:00+01:00</dd></div><div><dt>Agent version:</dt><dd>1.1.1007</dd></div><div><dt>Last root scanned:</dt><dd>2021-08-08T11:12:25+01:00</dd></div></dl></div><div class="thumb"></div></div>
<footer><button>Close</button></footer></div>
</figure>
</div>
<div class="mid"><p class="switch-note">Switch<br>Products</p><svg><use href="#arrow"/></svg></div>
<div>
<h2 class="mb-0">PRODUCT A+B</h2>
<div class="stack">
<div class="scr new win w1">
<div class="m-top"><svg class="bird"><use href="#bird"/></svg><span class="word">stellarOne</span><span class="who d-flex align-items-center"><svg class="ic s7"><use href="#user"/></svg>Alma (Alma Lawson)</span><i class="car"></i><svg class="disc"><use href="#disc"/></svg><span class="brand"><b>tx</b><i>One</i><small>networks</small></span></div>
<nav class="m-nav"><a href="#">Dashboard</a><a href="#" class="on">Agents</a><a href="#">Logs <i class="car"></i></a><a href="#">Administration <i class="car"></i></a><a href="#">About</a></nav>
<div class="ttl"><svg class="ic s7"><use href="#back"/></svg><svg class="ic s7"><use href="#folder"/></svg><b>Auckland (412)</b><label><input type="text" class="bx" value="1" aria-label="Page" style="width:17px;padding-left:4px">/ 40</label><span class="d-flex pair"><button class="bx gy b10" aria-label="Previous"><svg class="chev opacity-50"><use href="#lt"/></svg></button><button class="bx b10" aria-label="Next"><svg class="chev"><use href="#gt"/></svg></button></span></div>
<div class="fbar"><label class="fn"><b>Function Type:</b><select><option>StellarProtect</option></select><i class="car"></i></label><label class="inh"><b>Policy Inheritance:</b><input type="checkbox" class="sw">Inherit from parent group: &nbsp;New Zealand</label><span class="vl"></span><label><b>Self-management:</b><input type="checkbox" class="sw"></label><svg class="ic s6 ms-auto"><use href="#gear"/></svg></div>
<div class="ptab"><a href="#">Policy</a></div>
<div class="cards"><div>
<div class="pc"><h3>Application Lockdown</h3><p>When Application Lockdown is turned on, the endpoint will only be able to access applications that are<br>in the Approved List. If required files are not in the Approved list, there is a risk that this endpoint will not<br>be able to restart or log on.</p>
<label><input type="radio" name="w1" checked>Detect</label><p class="in z">When an application not in the Approved List launches, it is allowed and the user will receive a<br>notification.</p>
<label class="i2"><input type="checkbox" class="sw" checked>DLL/Driver Lockdown</label><label class="i2"><input type="checkbox" class="sw" checked>Script Lockdown</label><label class="i2"><input type="checkbox" class="sw" checked>Intelligent Runtime Learning</label>
<label><input type="radio" name="w1">Enforce</label><p class="in z">When an application not in the Approved List launches, it is blocked and the user will receive a<br>notification.</p>
<label><input type="radio" name="w1">Disable</label><p class="in z">Application Lockdown is disabled.</p><hr>
<a class="lk" href="#"><svg class="ic s6"><use href="#doc"/></svg>Excluded Paths (2)</a><p>To configure lockdown exclusion settings for Approved List.</p>
<a class="lk" href="#"><svg class="ic s6"><use href="#doc"/></svg>Trusted Hash Values (2)</a><p class="last">To configure trusted hash values for Approved List.</p></div>
<div class="pc"><h3>Multi-Method Threat Prevention</h3><p>OT root of trust and advanced threat scan secure the assets without...</p>
<label><input type="checkbox" class="sw" checked>Real-Time Scan</label><label class="i3"><input type="checkbox" class="ck" checked>Predictive Machine Learning</label><a class="adv" href="#">› &nbsp;Advanced Options</a>
<label class="mt-2"><input type="checkbox" class="sw">Scheduled Scan<button class="sm ms-1"><svg class="ic s5"><use href="#four"/></svg>Schedule</button></label><a class="adv" href="#">› &nbsp;Advanced Options</a><hr>
<a class="lk" href="#"><svg class="ic s6"><use href="#doc"/></svg>Real-Time Scan Exclusions (1)</a><p>To configure scan exclusion settings for real-time scan.</p></div>
</div><div>
<div class="pc"><h3>Device Control</h3><p>Block external device access for USB drives on managed endpoints.</p><label><input type="checkbox" class="sw" checked>Device Control</label><hr><a class="lk" href="#"><svg class="ic s6"><use href="#doc"/></svg>Trusted USB Device (3)</a><p>The USB devices added will be granted permanent access to managed endpoints.</p></div>
</div></div>
<div class="fade-out"></div>
</div>
<div class="scr new win w2">
<div class="m-top"><svg class="bird"><use href="#bird"/></svg><span class="word">stellarOne</span><span class="who d-flex align-items-center"><svg class="ic s7"><use href="#user"/></svg>Alma (Alma Lawson)</span><i class="car"></i><svg class="disc"><use href="#disc"/></svg><span class="brand"><b>tx</b><i>One</i><small>networks</small></span></div>
<nav class="m-nav"><a href="#">Dashboard</a><a href="#" class="on">Agents</a><a href="#">Logs <i class="car"></i></a><a href="#">Administration <i class="car"></i></a><a href="#">About</a></nav>
<div class="ttl"><svg class="ic s7"><use href="#back"/></svg><svg class="ic s7"><use href="#folder"/></svg><b>Auckland (412)</b><label><input type="text" class="bx" value="1" aria-label="Page" style="width:17px;padding-left:4px">/ 40</label><span class="d-flex pair"><button class="bx gy b10" aria-label="Previous"><svg class="chev opacity-50"><use href="#lt"/></svg></button><button class="bx b10" aria-label="Next"><svg class="chev"><use href="#gt"/></svg></button></span></div>
<div class="fbar"><label class="fn"><b>Function Type:</b><select><option>StellarProtect (Legacy Mode)</option></select><i class="car"></i></label><label class="inh"><b>Policy Inheritance:</b><input type="checkbox" class="sw">Inherit from parent group: &nbsp;New Zealand</label><span class="vl"></span><label><b>Self-management:</b><input type="checkbox" class="sw"></label><svg class="ic s6 ms-auto"><use href="#gear"/></svg></div>
<div class="ptab"><a href="#">Policy</a></div>
<div class="cards"><div>
<div class="pc"><h3>Application Lockdown</h3><p>When Application Lockdown is turned on, the endpoint will only be able to access applications that are<br>in the Approved List. If required files are not in the Approved list, there is a risk that this endpoint will not<br>be able to restart or log on.</p>
<label><input type="checkbox" class="sw" checked>Application Lockdown</label><label class="i3"><input type="checkbox" class="sw" checked>DLL/Driver Lockdown</label><label class="i3"><input type="checkbox" class="sw" checked>Script Lockdown</label><label class="i3"><input type="checkbox" class="sw">Write Protection</label><label class="i4 off"><input type="checkbox" disabled>Also protect Approved List</label><label class="i3"><input type="checkbox" class="sw">Filess Attack Prevention</label><label class="i3"><input type="checkbox" class="sw">Intelligent Runtime Learning</label><hr>
<a class="lk" href="#"><svg class="ic s6"><use href="#doc"/></svg>Excluded Paths (2)</a><p>To configure lockdown exclusion settings for Approved List.</p>
<a class="lk" href="#"><svg class="ic s6"><use href="#doc"/></svg>Trusted Hash Values (2)</a><p>To configure trusted hash values for Approved List.</p>
<a class="lk" href="#"><svg class="ic s6"><use href="#doc"/></svg>Write Protection Exclusions (2)</a><p class="last">Write protection exclusions defined by users will not be blocked by Application Lockdown.</p></div>
<div class="pc"><h3>Threat Prevention</h3><p>Persistently scan new and changed files, along with system memory, to provide security assessment for<br>maximum protection against threats. &nbsp; <svg class="ic s5 vi"><use href="#inf"/></svg></p>
<label><input type="checkbox" class="sw" checked>Real-Time Scan</label><a class="adv" href="#">› &nbsp;Advanced Options</a>
<label class="sp"><input type="checkbox" class="sw">Scheduled Scan<button class="sm ms-1"><svg class="ic s5"><use href="#four"/></svg>Schedule</button></label><a class="adv" href="#">› &nbsp;Advanced Options</a><hr>
<a class="lk" href="#"><svg class="ic s6"><use href="#doc"/></svg>Real-Time Scan Exclusions (1)</a><p>To configure scan exclusion settings for real-time scan.</p><a class="lk" href="#"><svg class="ic s6"><use href="#doc"/></svg>Scheduled Scan Exclusions (2)</a></div>
</div><div>
<div class="pc"><h3>Device Control</h3><p>Block external device access for USB drives, CD/DVD drives, and floppy disks on managed<br>endpoints.</p><label><input type="checkbox" class="sw" checked>Device Control</label><hr><a class="lk" href="#"><svg class="ic s6"><use href="#doc"/></svg>Trusted USB Device (3)</a><p class="last">The USB devices added will be granted permanent access to managed endpoints.</p></div>
<div class="pc"><h3>User-Defined Suspicious Objects (3)</h3><p>Manually update new threat information to protect against suspicious objects not yet identified on your<br>network. Note: The suspicious objects extracted from third-party services can be viewed on <a href="#">Downloads /<br>Updates.</a></p><button class="sm"><svg class="ic s5"><use href="#plus"/></svg>Add</button>
<table class="t-obj"><thead><tr><th><input type="checkbox" aria-label="All"></th><th>Hash / File Path &nbsp;↓</th><th>Type</th><th>Suspicious Object Action <svg class="ic s5"><use href="#inf"/></svg></th><th>Note</th><th>Actions</th></tr></thead><tbody>
<tr><td><input type="checkbox" aria-label="Object 1"></td><td>da39a3ee5e6b4b0...</td><td>Hash</td><td>Log</td><td>-</td><td><svg class="ic s5"><use href="#pen"/></svg><svg class="ic s5"><use href="#bin"/></svg></td></tr>
<tr><td><input type="checkbox" aria-label="Object 2"></td><td>5a021bbfb6489e54...</td><td>Hash</td><td>Log</td><td>-</td><td><svg class="ic s5"><use href="#pen"/></svg><svg class="ic s5"><use href="#bin"/></svg></td></tr>
<tr><td><input type="checkbox" aria-label="Object 3"></td><td>C:\temp\evil_prog...</td><td>File path</td><td>Block</td><td>-</td><td><svg class="ic s5"><use href="#pen"/></svg><svg class="ic s5"><use href="#bin"/></svg></td></tr></tbody></table></div>
<div class="pc"><h3>Agent Password</h3><p>The password must be 8 to 64 alphanumeric characters. The following characters are not supported: | &gt;<br>" : &lt; \ spaces</p><div class="adm"><a href="#" class="on">ADMINISTRATOR</a><a href="#">USER</a></div>
<label class="pw"><span>New Password<span class="rd">*</span>:</span><input type="password"></label><label class="pw"><span>Confirm Password<span class="rd">*</span>:</span><input type="password"></label><button class="sm"><svg class="ic s5"><use href="#four"/></svg>Save</button></div>
<div class="pc" style="height:40px"></div>
</div></div>
<div class="fade-out"></div>
</div>
</div>
</div>
</div>
</section>
</main>
<script src="https://cdn.jsdelivr.net/npm/bootstrap@5.3.0/dist/js/bootstrap.bundle.min.js"></script>
</body>
</html>
